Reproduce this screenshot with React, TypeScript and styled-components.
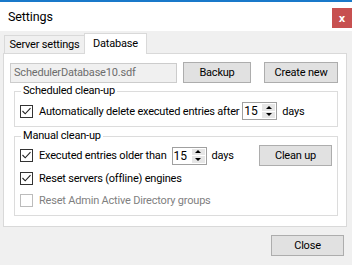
import React from 'react';
import styled, { createGlobalStyle } from 'styled-components';

const GlobalStyle = createGlobalStyle`
  html, body {
    margin: 0;
    padding: 0;
    background: #f0f0f0;
  }
  body {
    font-family: Roboto, 'Liberation Sans', sans-serif;
    font-size: 11px;
    letter-spacing: -0.2px;
    color: #000;
  }
`;

const Window = styled.div`
  width: 352px;
  height: 265px;
  display: flex;
  flex-direction: column;
  background: #f0f0f0;
  overflow: hidden;
`;

const TitleBar = styled.div`
  height: 31px;
  flex-shrink: 0;
  box-sizing: border-box;
  background: #fff;
  border-top: 2px solid #1979ca;
  display: flex;
  align-items: center;
  justify-content: space-between;
  padding-left: 8px;
`;

const Title = styled.span`
  font-size: 12.5px;
  letter-spacing: -0.1px;
  margin-top: -1px;
`;

const CloseX = styled.div`
  align-self: flex-start;
  width: 20px;
  height: 20px;
  margin-top: 6px;
  background: #c75050;
  color: #fff;
  font-family: 'DejaVu Sans', sans-serif;
  font-weight: bold;
  font-size: 10px;
  display: flex;
  align-items: center;
  justify-content: center;
`;

const Body = styled.div`
  flex: 1;
  display: flex;
  flex-direction: column;
  padding: 2px 5px 0 3px;
`;

const TabStrip = styled.div`
  display: flex;
  align-items: flex-end;
  height: 20px;
  padding-left: 1px;
  position: relative;
  z-index: 1;
`;

const Tab = styled.div<{ $active?: boolean; $width: number }>`
  box-sizing: border-box;
  width: ${(p) => p.$width}px;
  height: ${(p) => (p.$active ? '21px' : '18px')};
  margin-bottom: ${(p) => (p.$active ? '-1px' : '0')};
  margin-left: ${(p) => (p.$active ? '-1px' : '0')};
  background: ${(p) => (p.$active ? '#fff' : '#f0f0f0')};
  border: 1px solid #d9d9d9;
  border-bottom: none;
  display: flex;
  align-items: center;
  justify-content: center;
  padding-bottom: ${(p) => (p.$active ? '2px' : '0')};
  white-space: nowrap;
`;

const TabPage = styled.div`
  height: 174px;
  flex-shrink: 0;
  box-sizing: border-box;
  background: #fff;
  border: 1px solid #d9d9d9;
  padding: 8px 0 0 6px;
  display: flex;
  flex-direction: column;
`;

const FileRow = styled.div`
  display: flex;
  align-items: center;
  height: 21px;
`;

const TextBox = styled.div`
  width: 167px;
  height: 20px;
  box-sizing: border-box;
  border: 1px solid #cccccc;
  background: #f0f0f0;
  color: #6d6d6d;
  padding-left: 3px;
  display: flex;
  align-items: center;
`;

const Button = styled.div<{ $width: number; $gap?: number; $auto?: boolean }>`
  width: ${(p) => p.$width}px;
  height: 21px;
  flex-shrink: 0;
  box-sizing: border-box;
  margin-left: ${(p) => (p.$auto ? 'auto' : `${p.$gap ?? 0}px`)};
  background: #e1e1e1;
  border: 1px solid #adadad;
  display: flex;
  align-items: center;
  justify-content: center;
  white-space: nowrap;
`;

const Group = styled.fieldset<{ $height: number; $top: number }>`
  margin: ${(p) => p.$top}px 0 0 4px;
  width: 324px;
  height: ${(p) => p.$height}px;
  box-sizing: border-box;
  border: 1px solid #dcdcdc;
  padding: 0 5px 0 5px;
  display: flex;
  flex-direction: column;
  min-width: 0;
`;

const Legend = styled.legend`
  padding: 0 2px;
  margin-left: 1px;
  line-height: 14px;
`;

const Row = styled.div<{ $top: number; $height?: number }>`
  display: flex;
  align-items: center;
  margin-top: ${(p) => p.$top}px;
  height: ${(p) => p.$height ?? 18}px;
`;

const Box = styled.div<{ $disabled?: boolean }>`
  width: 13px;
  height: 13px;
  box-sizing: border-box;
  border: 1px solid ${(p) => (p.$disabled ? '#bcbcbc' : '#333')};
  background: #fff;
  margin-right: 6px;
  display: flex;
  align-items: center;
  justify-content: center;
  flex-shrink: 0;
`;

const Label = styled.span<{ $disabled?: boolean }>`
  color: ${(p) => (p.$disabled ? '#7f7f7f' : '#000')};
  white-space: nowrap;
`;

const Spin = styled.div<{ $gap: number }>`
  width: 35px;
  height: 18px;
  flex-shrink: 0;
  box-sizing: border-box;
  border: 1px solid #a0a0a0;
  margin: 0 5px 0 ${(p) => p.$gap}px;
  display: flex;
  background: #fff;
`;

const SpinValue = styled.div`
  flex: 1;
  padding-left: 1px;
  display: flex;
  align-items: center;
  font-size: 12px;
  letter-spacing: 0;
`;

const SpinButtons = styled.div`
  width: 15px;
  display: flex;
  flex-direction: column;
  gap: 1px;
  padding: 1px;
  box-sizing: border-box;
`;

const SpinHalf = styled.div<{ $down?: boolean }>`
  flex: 1;
  background: #e6e6e6;
  display: flex;
  align-items: center;
  justify-content: center;
  &::after {
    content: '';
    border-left: 3px solid transparent;
    border-right: 3px solid transparent;
    ${(p) => (p.$down ? 'border-top: 3px solid #000;' : 'border-bottom: 3px solid #000;')}
  }
`;

const Footer = styled.div`
  display: flex;
  justify-content: flex-end;
  padding: 8px 3px 0 0;
`;

const Check = ({ checked, disabled }: { checked?: boolean; disabled?: boolean }) => (
  <Box $disabled={disabled}>
    {checked && (
      <svg width="11" height="11" viewBox="0 0 11 11">
        <path d="M1.5 5 L4.2 7.8 L9.5 2.2" fill="none" stroke="#222" strokeWidth="1.1" />
      </svg>
    )}
  </Box>
);

const Spinner = ({ value, gap }: { value: number; gap: number }) => (
  <Spin $gap={gap}>
    <SpinValue>{value}</SpinValue>
    <SpinButtons>
      <SpinHalf />
      <SpinHalf $down />
    </SpinButtons>
  </Spin>
);

export default function App() {
  return (
    <Window>
      <GlobalStyle />
      <TitleBar>
        <Title>Settings</Title>
        <CloseX>x</CloseX>
      </TitleBar>
      <Body>
        <TabStrip>
          <Tab $width={81}>Server settings</Tab>
          <Tab $width={63} $active>Database</Tab>
        </TabStrip>
        <TabPage>
          <FileRow>
            <TextBox>SchedulerDatabase10.sdf</TextBox>
            <Button $width={68} $gap={6}>Backup</Button>
            <Button $width={74} $gap={13}>Create new</Button>
          </FileRow>
          <Group $height={43} $top={1}>
            <Legend>Scheduled clean-up</Legend>
            <Row $top={4}>
              <Check checked />
              <Label>Automatically delete executed entries after</Label>
              <Spinner value={15} gap={3} />
              <Label>days</Label>
            </Row>
          </Group>
          <Group $height={87} $top={2}>
            <Legend>Manual clean-up</Legend>
            <Row $top={2} $height={21}>
              <Check checked />
              <Label>Executed entries older than</Label>
              <Spinner value={15} gap={5} />
              <Label>days</Label>
              <Button $width={73} $auto>Clean up</Button>
            </Row>
            <Row $top={3}>
              <Check checked />
              <Label>Reset servers (offline) engines</Label>
            </Row>
            <Row $top={4}>
              <Check disabled />
              <Label $disabled>Reset Admin Active Directory groups</Label>
            </Row>
          </Group>
        </TabPage>
        <Footer>
          <Button $width={73}>Close</Button>
        </Footer>
      </Body>
    </Window>
  );
}
